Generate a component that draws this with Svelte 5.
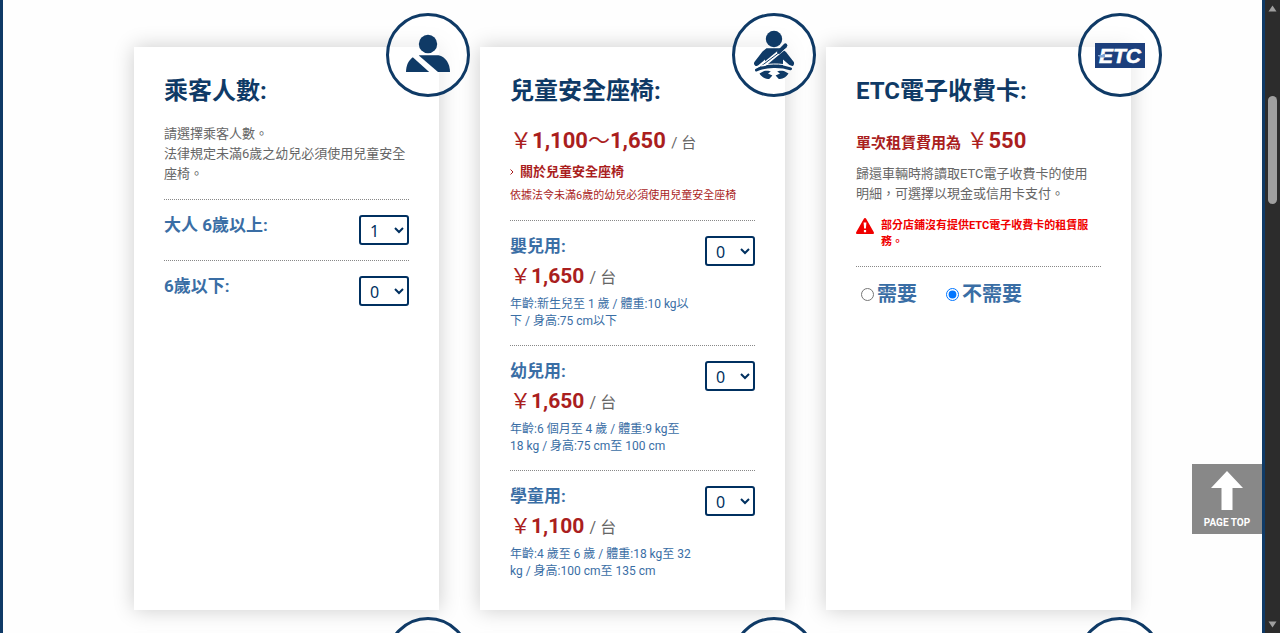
<script>
	let adults = $state('1');
	let children = $state('0');
	let etc = $state('no');

	let seats = $state([
		{ id: 'infant', name: '嬰兒用:', price: '1,650', desc: '年齡:新生兒至 1 歲 / 體重:10 kg以下 / 身高:75 cm以下', count: '0' },
		{ id: 'toddler', name: '幼兒用:', price: '1,650', desc: '年齡:6 個月至 4 歲 / 體重:9 kg至 18 kg / 身高:75 cm至 100 cm', count: '0' },
		{ id: 'junior', name: '學童用:', price: '1,100', desc: '年齡:4 歲至 6 歲 / 體重:18 kg至 32 kg / 身高:100 cm至 135 cm', count: '0' }
	]);

	const options = ['0', '1', '2', '3', '4', '5', '6', '7', '8'];

	let page;

	function toTop(e) {
		e.preventDefault();
		page.scrollTo({ top: 0, behavior: 'smooth' });
	}
</script>

<div class="window">
	<div class="page" bind:this={page}>
		<main class="cards">
			<section class="card">
				<div class="badge">
					<svg viewBox="0 0 84 84" aria-hidden="true">
						<circle cx="42" cy="31" r="9.2" />
						<path d="M26.8 44.2 L43.2 59 H20 C20 52.5 22.6 47.2 26.8 44.2 Z" />
						<path d="M34 42.2 H52.5 C59.5 43.8 64 50.5 64 59 H52 L32.8 42.6 Z" />
					</svg>
				</div>
				<h2>乘客人數:</h2>
				<p class="text">請選擇乘客人數。<br />法律規定未滿6歲之幼兒必須使用兒童安全座椅。</p>
				<div class="row">
					<label class="name" for="adults">大人 6歲以上:</label>
					<select id="adults" bind:value={adults}>
						{#each options.slice(1) as o}<option>{o}</option>{/each}
					</select>
				</div>
				<div class="row">
					<label class="name" for="children">6歲以下:</label>
					<select id="children" bind:value={children}>
						{#each options as o}<option>{o}</option>{/each}
					</select>
				</div>
			</section>

			<section class="card">
				<div class="badge">
					<svg viewBox="0 0 84 84" aria-hidden="true">
						<circle cx="42" cy="26" r="8.2" />
						<path d="M34.5 35.3 H49 L54 39 L61.8 49 C63 52 60.2 54.2 58 52.4 L51 46.6 V54 H33 V46.6 L26 52.6 C23.6 54 21 51.4 22.4 49 L30.5 38.4 Z" />
						<path class="gap" d="M51 36 L28 55" />
						<path class="belt" d="M54.5 34 L24 57" />
						<path class="strap" d="M47 38.8 L53.4 32.4" />
						<path class="lap-gap" d="M24 54.6 C34 50 49 50 60 53.4" />
						<path class="lap" d="M24.5 57 C34 52.6 49 52.6 58.5 55.8" />
						<path d="M27.5 60.6 L32 58 C34.5 57.4 37.5 57.6 38.8 58.4 L36 60.4 L40.4 62.6 L37.2 66 C33.6 66.6 29.8 64.4 27.5 60.6 Z" />
						<path d="M56.5 60.6 L52 58 C49.5 57.4 46.5 57.6 45.2 58.4 L48 60.4 L43.6 62.6 L46.8 66 C50.4 66.6 54.2 64.4 56.5 60.6 Z" />
					</svg>
				</div>
				<h2>兒童安全座椅:</h2>
				<p class="price"><i>￥</i><b>1,100</b><i>〜</i><b>1,650</b> <small>/ 台</small></p>
				<a class="about" href="#seats">
					<svg viewBox="0 0 4 6" aria-hidden="true"><path d="M0.5 0.5 L3 3 L0.5 5.5" /></svg>
					關於兒童安全座椅
				</a>
				<p class="law">依據法令未滿6歲的幼兒必須使用兒童安全座椅</p>
				{#each seats as seat (seat.id)}
					<div class="row">
						<div class="info">
							<label class="name" for={seat.id}>{seat.name}</label>
							<p class="price unit"><i>￥</i><b>{seat.price}</b> <small>/ 台</small></p>
							<p class="desc">{seat.desc}</p>
						</div>
						<select id={seat.id} bind:value={seat.count}>
							{#each options.slice(0, 5) as o}<option>{o}</option>{/each}
						</select>
					</div>
				{/each}
			</section>

			<section class="card">
				<div class="badge">
					<svg viewBox="0 0 84 84" aria-hidden="true">
						<rect x="17" y="30" width="50" height="25" />
						<text x="21" y="50">ETC</text>
						<path class="shine" d="M20 42 H24.5 V41 H27 V44.5 H21.5 V43.2 H20 Z" />
					</svg>
				</div>
				<h2>ETC電子收費卡:</h2>
				<p class="price"><strong>單次租賃費用為</strong> <i>￥</i><b>550</b></p>
				<p class="text note">歸還車輛時將讀取ETC電子收費卡的使用明細，可選擇以現金或信用卡支付。</p>
				<p class="warning">
					<svg viewBox="0 0 18 16" aria-hidden="true">
						<path d="M9 0 C9.6 0 10 0.3 10.3 0.9 L17.7 14 C18.3 15.2 17.8 16 16.6 16 H1.4 C0.2 16 -0.3 15.2 0.3 14 L7.7 0.9 C8 0.3 8.4 0 9 0 Z" />
						<path class="mark" d="M7.6 4.5 H10.4 L9.9 10.5 H8.1 Z M7.9 12 H10.1 V14.2 H7.9 Z" />
					</svg>
					<span>部分店鋪沒有提供ETC電子收費卡的租賃服務。</span>
				</p>
				<div class="row choices">
					<label><input type="radio" name="etc" value="yes" bind:group={etc} />需要</label>
					<label><input type="radio" name="etc" value="no" bind:group={etc} />不需要</label>
				</div>
			</section>

			{#each [1, 2, 3] as n (n)}
				<section class="card"><div class="badge"></div></section>
			{/each}
		</main>
	</div>

	<a class="pagetop" href="#top" onclick={toTop}>
		<svg viewBox="0 0 32 39" aria-hidden="true"><path d="M16 0 L32 17 H21.5 V39 H10.5 V17 H0 Z" /></svg>
		PAGE TOP
	</a>

	<div class="scrollbar" aria-hidden="true">
		<svg viewBox="0 0 9 7"><path d="M4.5 0.5 L8.5 6.5 H0.5 Z" /></svg>
		<div class="track"><div class="thumb"></div></div>
		<svg viewBox="0 0 9 7"><path d="M4.5 6.5 L8.5 0.5 H0.5 Z" /></svg>
	</div>
</div>

<style>
	:global(body) {
		margin: 0;
		background: #fefefe;
	}

	.window {
		--navy: #0f3a66;
		--blue: #3a6ea5;
		--red: #aa1e1e;
		position: relative;
		display: flex;
		height: 100vh;
		font-family: Roboto, 'Noto Sans CJK TC', sans-serif;
		font-size: 13px;
		line-height: 20px;
		color: #666;
	}

	.page {
		flex: 1;
		box-sizing: border-box;
		border: solid var(--navy);
		border-width: 0 3px;
		overflow-y: auto;
		scrollbar-width: none;
	}

	.cards {
		display: grid;
		grid-template-columns: repeat(3, 1fr);
		gap: 41px;
		max-width: 997px;
		margin: 0 auto;
		padding: 47px 0;
	}

	.card {
		position: relative;
		min-height: 200px;
		box-sizing: border-box;
		padding: 30px;
		background: #fff;
		box-shadow: 0 0 20px rgba(0, 0, 0, 0.2);
	}

	.badge {
		position: absolute;
		top: -34px;
		right: -31px;
		width: 84px;
		height: 84px;
		box-sizing: border-box;
		border: 3px solid var(--navy);
		border-radius: 50%;
		background: rgba(255, 255, 255, 0.5);
	}

	.badge svg {
		display: block;
		margin: -3px;
		width: 84px;
		height: 84px;
		fill: var(--navy);
	}

	.badge .gap,
	.badge .lap-gap {
		fill: none;
		stroke: #fff;
		stroke-width: 4;
	}

	.badge .lap-gap {
		stroke-width: 1;
	}

	.badge .belt,
	.badge .lap,
	.badge .strap {
		fill: none;
		stroke: var(--navy);
		stroke-width: 1;
		stroke-linecap: round;
	}

	.badge .lap {
		stroke-width: 3;
	}

	.badge .strap {
		stroke-width: 4;
	}

	.badge rect {
		fill: #1c3f7c;
	}

	.badge text {
		font: italic bold 21px 'Liberation Sans', sans-serif;
		fill: #fff;
		stroke: #fff;
		stroke-width: 0.6;
	}

	.badge .shine {
		fill: #7fa6d6;
	}

	h2 {
		margin: 0 0 19px;
		font-size: 24px;
		line-height: 28px;
		color: var(--navy);
	}

	p {
		margin: 0;
	}

	.text {
		margin-bottom: 15px;
		padding-right: 2px;
	}

	.row {
		display: flex;
		justify-content: space-between;
		align-items: flex-start;
		gap: 12px;
		padding: 15px 0;
		border-top: 1px dotted #888;
	}

	.row:last-child {
		padding-bottom: 0;
	}

	.name {
		display: block;
		font-size: 17px;
		font-weight: bold;
		line-height: 20px;
		color: var(--blue);
	}

	.info {
		flex: 1;
	}

	select {
		width: 50px;
		height: 30px;
		padding: 2px 0 0 5px;
		border: 2px solid #003060;
		border-radius: 3px;
		background: #fff;
		font-family: 'Noto Sans', sans-serif;
		font-size: 16px;
		color: #003060;
	}

	.price {
		font-size: 22px;
		line-height: 34px;
		color: var(--red);
		white-space: nowrap;
	}

	.price.unit {
		font-size: 21px;
		line-height: 40px;
	}

	/* keeps the smaller inline text from stretching the line */
	.price > * {
		line-height: 20px;
	}

	.price i {
		font-style: normal;
		font-weight: normal;
	}

	.price small {
		font-size: 15px;
		color: #666;
	}

	.price.unit small {
		font-size: 16px;
	}

	.price strong {
		font-size: 15px;
	}

	.about {
		display: flex;
		align-items: center;
		gap: 6px;
		margin: 4px 0 5px;
		font-weight: bold;
		color: var(--red);
		text-decoration: none;
	}

	.about svg {
		width: 4px;
		height: 6px;
		fill: none;
		stroke: var(--red);
	}

	.law {
		margin-bottom: 15px;
		font-size: 11px;
		line-height: 18px;
		color: var(--red);
	}

	.desc {
		font-size: 12px;
		line-height: 17px;
		color: var(--blue);
	}

	.note {
		margin: 6px 0 14px;
	}

	.warning {
		display: flex;
		align-items: flex-start;
		gap: 7px;
		margin-bottom: 16px;
		font-size: 11px;
		font-weight: bold;
		line-height: 16px;
		color: #f00000;
	}

	.warning svg {
		flex: none;
		width: 18px;
		height: 16px;
		fill: #f00000;
	}

	.warning .mark {
		fill: #fff;
	}

	.choices {
		justify-content: flex-start;
		gap: 24px;
		padding-top: 12px;
	}

	.choices label {
		display: flex;
		align-items: center;
		font-size: 20px;
		font-weight: bold;
		line-height: 30px;
		color: var(--blue);
	}

	.choices input {
		width: 13px;
		height: 13px;
		margin: 0 3px 0 5px;
	}

	.pagetop {
		position: absolute;
		right: 18px;
		bottom: 99px;
		display: flex;
		flex-direction: column;
		align-items: center;
		gap: 7px;
		width: 70px;
		height: 70px;
		box-sizing: border-box;
		padding-top: 7px;
		background: #888;
		font-size: 10px;
		font-weight: bold;
		line-height: 12px;
		color: #fff;
		text-decoration: none;
	}

	.pagetop svg {
		width: 32px;
		height: 39px;
		fill: #fff;
	}

	.scrollbar {
		display: flex;
		flex-direction: column;
		align-items: center;
		justify-content: space-between;
		width: 15px;
		padding: 5px 0;
		box-sizing: border-box;
		background: #2c2c2c;
	}

	.scrollbar svg {
		width: 9px;
		height: 7px;
		fill: #9f9f9f;
	}

	.track {
		flex: 1;
		padding-top: 84px;
	}

	.thumb {
		width: 9px;
		height: 108px;
		border-radius: 5px;
		background: #9f9f9f;
	}
</style>
